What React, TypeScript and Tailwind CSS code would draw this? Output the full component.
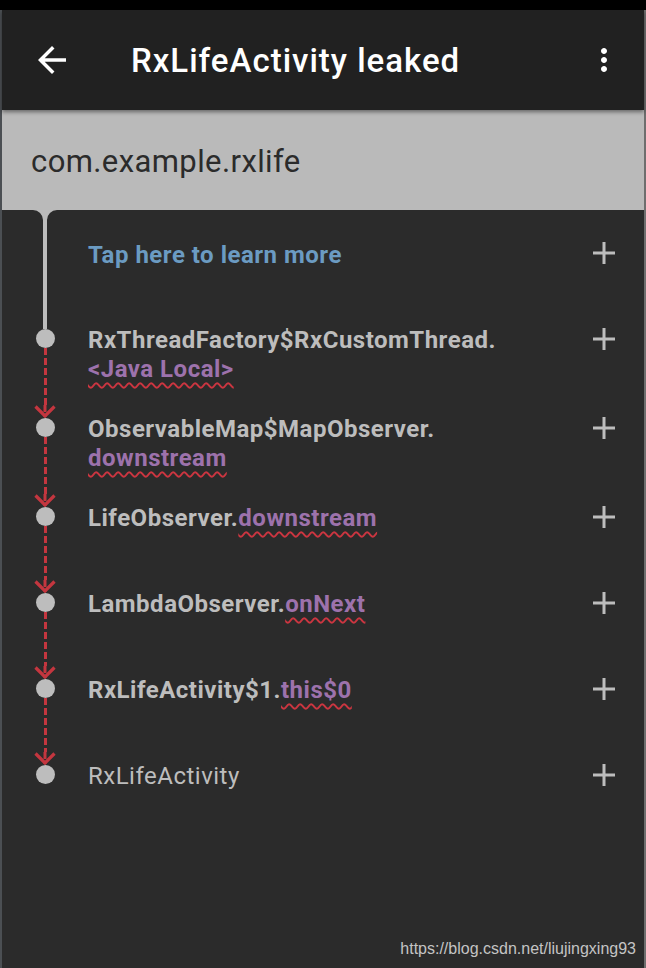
import React from 'react';

type Part = { text: string; ref?: boolean };

type Row = {
  parts: Part[];
  bold?: boolean;
};

const rows: Row[] = [
  { parts: [{ text: 'RxThreadFactory$RxCustomThread.' }, { text: '<Java Local>', ref: true }], bold: true },
  { parts: [{ text: 'ObservableMap$MapObserver.' }, { text: 'downstream', ref: true }], bold: true },
  { parts: [{ text: 'LifeObserver.' }, { text: 'downstream', ref: true }], bold: true },
  { parts: [{ text: 'LambdaObserver.' }, { text: 'onNext', ref: true }], bold: true },
  { parts: [{ text: 'RxLifeActivity$1.' }, { text: 'this$0', ref: true }], bold: true },
  { parts: [{ text: 'RxLifeActivity' }] },
];

const font = { fontFamily: 'Roboto, "Noto Sans", sans-serif' };

const PlusIcon = () => (
  <svg width="22" height="22" viewBox="0 0 22 22">
    <rect x="0" y="9.5" width="22" height="3" fill="#bdbdbd" />
    <rect x="9.5" y="0" width="3" height="22" fill="#bdbdbd" />
  </svg>
);

const Plus = () => (
  <div className="flex w-[80px] shrink-0 justify-center pt-[8px]">
    <div className="flex h-[29px] items-center">
      <PlusIcon />
    </div>
  </div>
);

const ArrowHead = () => (
  <svg width="22" height="13" viewBox="0 0 22 13">
    <line x1="11" y1="0" x2="11" y2="12" stroke="#c4363f" strokeWidth="3" strokeDasharray="7 3" />
    <polyline points="1.5,1.5 11,11 20.5,1.5" fill="none" stroke="#c4363f" strokeWidth="3.2" />
  </svg>
);

const Gutter = ({ first, last }: { first: boolean; last: boolean }) => (
  <div className="flex w-[86px] shrink-0 flex-col items-center">
    {first ? <div className="h-[13px] w-[4px] bg-[#bdbdbd]" /> : <ArrowHead />}
    <div className="h-[19px] w-[19px] shrink-0 rounded-full bg-[#bdbdbd]" />
    {!last && (
      <div className="w-[3px] flex-1 bg-[repeating-linear-gradient(to_bottom,#c4363f_0px,#c4363f_7px,transparent_7px,transparent_10px)]" />
    )}
  </div>
);

const TraceRow = ({ row, index }: { row: Row; index: number }) => (
  <li className="flex">
    <Gutter first={index === 0} last={index === rows.length - 1} />
    <div
      className={`min-h-[86px] flex-1 pt-[10px] pb-[21px] text-[24px] leading-[29px] tracking-[0.5px] text-[#bdbdbd] ${
        row.bold ? 'font-bold' : 'font-normal'
      }`}
    >
      {row.parts.map((p, i) =>
        p.ref ? (
          <React.Fragment key={i}>
            <wbr />
            <span className="whitespace-nowrap text-[#9d72ac] underline decoration-[#cc3540] decoration-wavy decoration-[1.5px] underline-offset-[5px]">
              {p.text}
            </span>
          </React.Fragment>
        ) : (
          <span key={i}>{p.text}</span>
        ),
      )}
    </div>
    <Plus />
  </li>
);

export default function App() {
  return (
    <div className="flex min-h-[968px] w-[646px] flex-col bg-black pt-[10px]" style={font}>
      <div className="flex flex-1 flex-col border-r-[2px] border-l-[2px] border-r-[#6e6e6e] border-l-[#4b4f53] bg-[#2b2b2b]">
        {/* toolbar */}
        <header className="relative z-10 flex h-[100px] items-center bg-[#212121] shadow-[0_2px_4px_rgba(0,0,0,0.45)]">
          <svg className="ml-[29px]" width="42" height="42" viewBox="0 0 24 24" fill="#ffffff">
            <path d="M20 11H7.83l5.59-5.59L12 4l-8 8 8 8 1.41-1.41L7.83 13H20v-2z" />
          </svg>
          <h1 className="ml-[58px] pt-[2px] text-[33px] font-medium tracking-[1px] text-white">RxLifeActivity leaked</h1>
          <svg className="mr-[22px] ml-auto" width="36" height="36" viewBox="0 0 24 24" fill="#ffffff">
            <path d="M12 8c1.1 0 2-.9 2-2s-.9-2-2-2-2 .9-2 2 .9 2 2 2zm0 2c-1.1 0-2 .9-2 2s.9 2 2 2 2-.9 2-2-.9-2-2-2zm0 6c-1.1 0-2 .9-2 2s.9 2 2 2 2-.9 2-2-.9-2-2-2z" />
          </svg>
        </header>

        {/* app package */}
        <div className="flex h-[100px] items-center bg-[#bababa] pt-[4px] pl-[29px] text-[31px] tracking-[0.4px] text-[#2b2b2b]">
          com.example.rxlife
        </div>

        {/* learn more */}
        <div className="flex h-[106px]">
          <div className="flex w-[86px] shrink-0 flex-col items-center">
            <svg width="28" height="10" viewBox="0 0 28 10">
              <path d="M2 0 H26 A10 10 0 0 0 16 10 H12 A10 10 0 0 0 2 0 Z" fill="#bababa" />
            </svg>
            <div className="w-[4px] flex-1 bg-[#bdbdbd]" />
          </div>
          <div className="flex-1 pt-[31px] text-[24px] leading-[29px] font-bold tracking-[0.5px] text-[#6b9bc2]">
            Tap here to learn more
          </div>
          <div className="flex w-[80px] shrink-0 justify-center pt-[28px]">
            <div className="flex h-[29px] items-center">
              <PlusIcon />
            </div>
          </div>
        </div>

        <ul className="flex flex-col">
          {rows.map((row, i) => (
            <TraceRow key={i} row={row} index={i} />
          ))}
        </ul>

        <div
          className="mt-auto flex justify-end pr-[8px] pb-[10px] text-[16px] leading-[18px] text-[#c4c4c4]"
          style={{ fontFamily: '"Liberation Sans", Arial, sans-serif' }}
        >
          https://blog.csdn.net/liujingxing93
        </div>
      </div>
    </div>
  );
}
